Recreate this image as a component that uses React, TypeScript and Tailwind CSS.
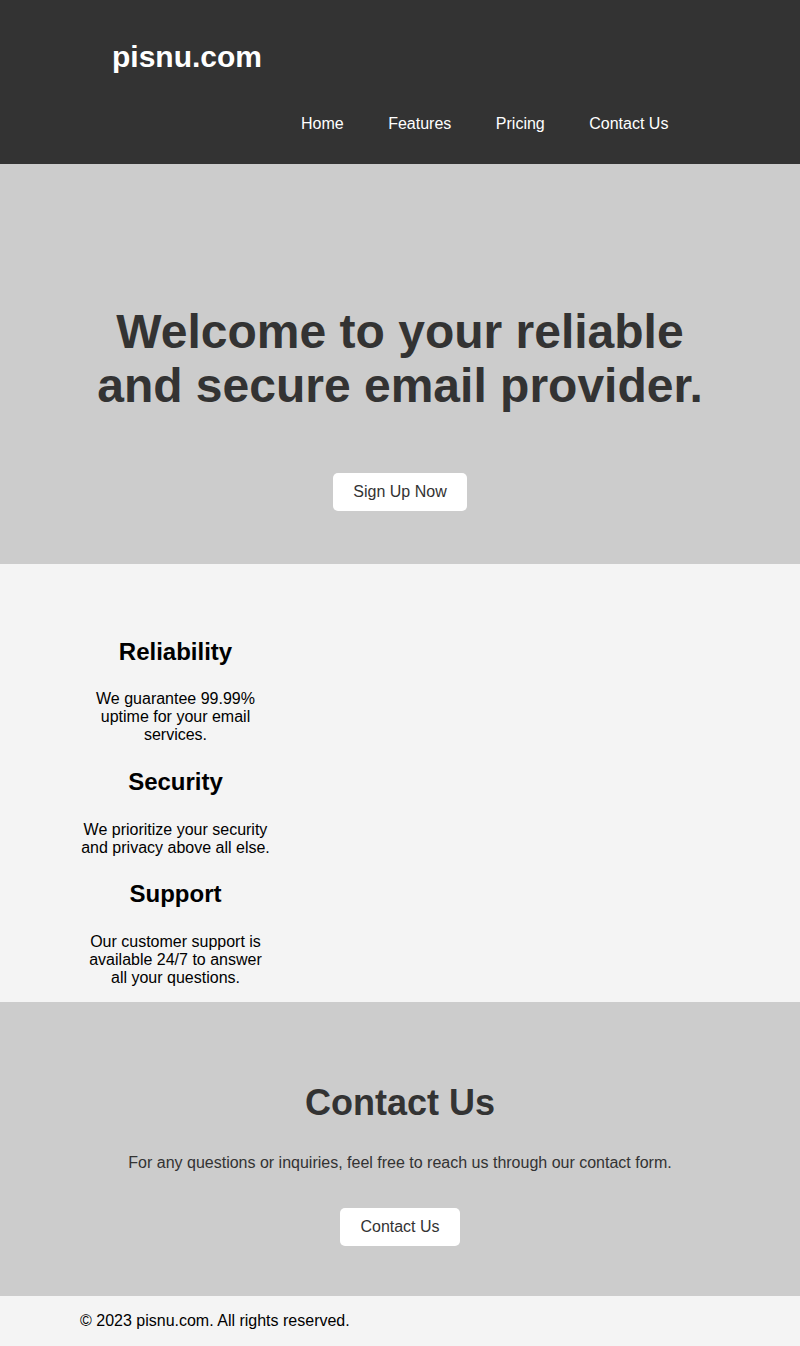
import React from "react";

export default function App() {
  return (
    <div className="font-['Liberation_Sans',Arial,sans-serif] leading-[1.117] w-full">
      <header className="bg-[#333333] text-white h-[164px] pt-[40px]">
        <div className="pl-[112px]">
          <h1 className="text-[30px] font-bold">pisnu.com</h1>
        </div>
        <nav className="mt-[41.5px] pl-[301px]">
          <ul className="flex gap-[44.5px] text-[16px]">
            <li><a href="#">Home</a></li>
            <li><a href="#">Features</a></li>
            <li><a href="#">Pricing</a></li>
            <li><a href="#">Contact Us</a></li>
          </ul>
        </nav>
      </header>

      <section className="bg-[#cccccc] h-[400px] pt-[141px] text-center text-[#333333]">
        <h1 className="w-[640px] mx-auto text-[48px] font-bold">
          Welcome to your reliable and secure email provider.
        </h1>
        <div className="mt-[61px]">
          <a href="#" className="inline-block bg-white rounded-[5px] px-[20px] py-[10px] text-[16px] text-[#333333]">
            Sign Up Now
          </a>
        </div>
      </section>

      <section className="bg-[#f4f4f4] pt-[74.5px] pb-[15.5px] text-black">
        <div className="w-[640px] mx-auto">
          <div className="w-[191px] text-center">
            <h3 className="text-[24px] font-bold">Reliability</h3>
            <p className="mt-[25px] text-[16px]">We guarantee 99.99% uptime for your email services.</p>
          </div>
          <div className="w-[191px] text-center mt-[25px]">
            <h3 className="text-[24px] font-bold">Security</h3>
            <p className="mt-[25px] text-[16px]">We prioritize your security and privacy above all else.</p>
          </div>
          <div className="w-[191px] text-center mt-[25px]">
            <h3 className="text-[24px] font-bold">Support</h3>
            <p className="mt-[25px] text-[16px]">Our customer support is available 24/7 to answer all your questions.</p>
          </div>
        </div>
      </section>

      <section className="bg-[#cccccc] h-[294px] pt-[81px] text-center text-[#333333]">
        <h2 className="text-[36px] font-bold">Contact Us</h2>
        <p className="mt-[30.5px] text-[16px]">
          For any questions or inquiries, feel free to reach us through our contact form.
        </p>
        <div className="mt-[36px]">
          <a href="#" className="inline-block bg-white rounded-[5px] px-[20px] py-[10px] text-[16px] text-[#333333]">
            Contact Us
          </a>
        </div>
      </section>

      <footer className="bg-[#f4f4f4] h-[50px] pt-[15.5px] pl-[80px] text-[16px] text-black">
        <p>© 2023 pisnu.com. All rights reserved.</p>
      </footer>
    </div>
  );
}
